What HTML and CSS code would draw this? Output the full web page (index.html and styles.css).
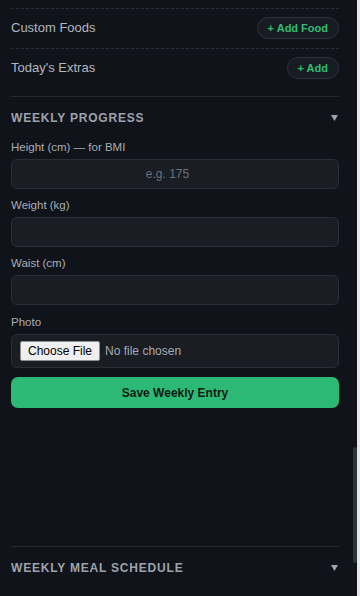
FILE: index.html
```html
<!DOCTYPE html>
<html lang="en">
<head>
<meta charset="utf-8">
<title>Weekly Progress</title>
<link rel="stylesheet" href="styles.css">
</head>
<body>
<div class="screen">
  <main class="panel">
    <div class="rows">
      <div class="row">
        <span class="row-label">Custom Foods</span>
        <button class="pill" type="button">+ Add Food</button>
      </div>
      <div class="row">
        <span class="row-label">Today's Extras</span>
        <button class="pill" type="button">+ Add</button>
      </div>
    </div>

    <section class="section">
      <div class="section-head">
        <h2 class="section-title">Weekly Progress</h2>
        <svg class="caret" width="7" height="6" viewBox="0 0 7 6" aria-hidden="true"><polygon points="0,0 7,0 3.5,6" fill="#9ea2ac"/></svg>
      </div>
      <form class="progress-form">
        <label class="field">
          <span class="field-label">Height (cm) — for BMI</span>
          <input class="input center" type="number" placeholder="e.g. 175">
        </label>
        <label class="field">
          <span class="field-label">Weight (kg)</span>
          <input class="input" type="number">
        </label>
        <label class="field">
          <span class="field-label">Waist (cm)</span>
          <input class="input" type="number">
        </label>
        <label class="field field-photo">
          <span class="field-label">Photo</span>
          <input class="file" type="file">
        </label>
        <button class="save" type="button">Save Weekly Entry</button>
      </form>
      <div class="history"></div>
    </section>

    <section class="section">
      <div class="section-head">
        <h2 class="section-title">Weekly Meal Schedule</h2>
        <svg class="caret" width="7" height="6" viewBox="0 0 7 6" aria-hidden="true"><polygon points="0,0 7,0 3.5,6" fill="#9ea2ac"/></svg>
      </div>
    </section>
  </main>
  <div class="scroll-thumb"></div>
</div>
</body>
</html>
```

FILE: styles.css
```css
* { box-sizing: border-box; }

html, body {
  margin: 0;
  padding: 0;
}

body {
  background: #e8e8e8;
  font-family: "Liberation Sans", Arial, sans-serif;
  width: 360px;
  height: 596px;
  overflow: hidden;
}

.screen {
  position: relative;
  display: flex;
  width: 360px;
  height: 596px;
}

.panel {
  width: 357px;
  height: 596px;
  background: #10131a;
  padding: 8px 18px 0 11px;
  overflow: hidden;
}

.rows {
  padding-bottom: 8px;
}

.row {
  display: flex;
  align-items: center;
  justify-content: space-between;
  height: 40px;
  border-top: 1px dashed #2a2e36;
  padding-bottom: 2px;
}

.row-label {
  font-size: 13px;
  color: #b3b7bf;
}

.pill {
  height: 22px;
  padding: 0 10px;
  border: 1px solid #2c3039;
  background: #181b22;
  border-radius: 11px;
  color: #2fbe6f;
  font-family: "Liberation Sans", Arial, sans-serif;
  font-weight: bold;
  font-size: 11px;
  line-height: 20px;
}

.section {
  border-top: 1px solid #252930;
}

.section-head {
  display: flex;
  align-items: center;
  justify-content: space-between;
  padding: 13px 0 14px;
}

.section-title {
  margin: 0;
  font-size: 12px;
  line-height: 16px;
  font-weight: bold;
  text-transform: uppercase;
  letter-spacing: 0.8px;
  color: #9ea2ac;
}

.caret {
  display: block;
  margin-right: 1px;
}

.progress-form {
  display: flex;
  flex-direction: column;
}

.field {
  display: flex;
  flex-direction: column;
  margin-bottom: 9px;
}

.field-photo {
  margin-top: 1px;
}

.field-label {
  font-size: 11.5px;
  line-height: 14px;
  color: #a9adb5;
  margin-bottom: 5px;
}

.input {
  width: 100%;
  height: 30px;
  background: #1a1d24;
  border: 1px solid #2a2e37;
  border-radius: 6px;
  color: #e5e7eb;
  font-family: "Liberation Sans", Arial, sans-serif;
  font-size: 12px;
  padding: 0 10px;
  outline: none;
}

.input.center {
  text-align: center;
}

.input::placeholder {
  color: #6b7079;
}

.file {
  width: 100%;
  height: 34px;
  background: #1a1d24;
  border: 1px solid #2a2e37;
  border-radius: 6px;
  color: #a5a9b1;
  font-family: "Liberation Sans", Arial, sans-serif;
  font-size: 12px;
  padding: 6px 8px;
}

.file::file-selector-button {
  font-family: "Liberation Sans", Arial, sans-serif;
  font-size: 12px;
  line-height: 14px;
  height: 20px;
  padding: 2px 7px;
  margin-right: 5px;
  background: #efefef;
  color: #000;
  border: 1px solid #8f8f8f;
  border-radius: 2px;
}

.save {
  height: 31px;
  width: 100%;
  border: none;
  border-radius: 7px;
  background: #2cb875;
  color: #0e1a13;
  font-family: "Liberation Sans", Arial, sans-serif;
  font-weight: bold;
  font-size: 12px;
}

.history {
  height: 138px;
}

.scroll-thumb {
  position: absolute;
  left: 353px;
  top: 447px;
  width: 4px;
  height: 116px;
  border-radius: 2px;
  background: #2e3239;
}
```
